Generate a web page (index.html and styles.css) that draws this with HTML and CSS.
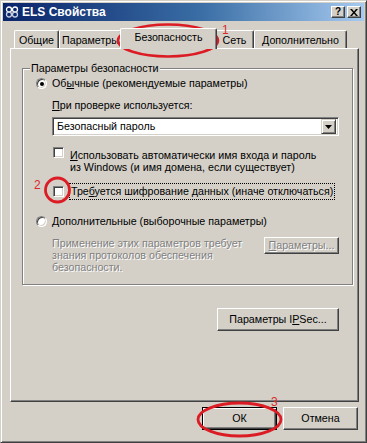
FILE: index.html
```html
<!DOCTYPE html>
<html lang="ru">
<head>
  <meta charset="UTF-8">
  <title>ELS Свойства</title>
  <link rel="stylesheet" href="styles.css">
</head>
<body>
  <div class="screen">
    <div class="window">
      <!-- Title bar -->
      <div class="titlebar">
        <svg class="app-icon" width="14" height="12" viewBox="0 0 14 12">
          <circle cx="4" cy="3.5" r="2.5" fill="none" stroke="#fff" stroke-width="1.3"/>
          <circle cx="10" cy="3.5" r="2.5" fill="none" stroke="#fff" stroke-width="1.3"/>
          <circle cx="4" cy="8.5" r="2.5" fill="none" stroke="#c8d0e0" stroke-width="1.3"/>
          <circle cx="10" cy="8.5" r="2.5" fill="none" stroke="#c8d0e0" stroke-width="1.3"/>
        </svg>
        <span class="title">ELS Свойства</span>
        <div class="title-buttons">
          <span class="tbtn help">?</span>
          <span class="tbtn close">
            <svg width="8" height="7" viewBox="0 0 8 7"><path d="M0 0h2l2 2.5L6 0h2L5 3.5 8 7H6L4 4.5 2 7H0l3-3.5z" fill="#000"/></svg>
          </span>
        </div>
      </div>

      <div class="content">
        <!-- Tabs -->
        <div class="tabs">
          <div class="tab tab-general">Общие</div>
          <div class="tab tab-params">Параметры</div>
          <div class="tab tab-security active">Безопасность</div>
          <div class="tab tab-net">Сеть</div>
          <div class="tab tab-extra">Дополнительно</div>
        </div>

        <!-- Tab page -->
        <div class="panel">
          <div class="group">
            <div class="group-title">Параметры безопасности</div>

            <div class="option-row first">
              <span class="radio checked"></span>
              <span>Об<u>ы</u>чные (рекомендуемые параметры)</span>
            </div>

            <div class="sub label-row"><u>П</u>ри проверке используется:</div>

            <div class="sub select">
              <span class="select-text">Безопасный пароль</span>
              <span class="select-btn">
                <svg width="7" height="4" viewBox="0 0 7 4"><path d="M0 0h7L3.5 4z" fill="#000"/></svg>
              </span>
            </div>

            <div class="check-row check-auto">
              <span class="checkbox"></span>
              <span class="check-text"><u>И</u>спользовать автоматически имя входа и пароль<br>из Windows (и имя домена, если существует)</span>
            </div>

            <div class="check-row check-crypt">
              <span class="checkbox"></span>
              <span class="focus-text">Тре<u>б</u>уется шифрование данных (иначе отключаться)</span>
            </div>

            <div class="option-row second">
              <span class="radio"></span>
              <span><u>Д</u>ополнительные (выборочные параметры)</span>
            </div>

            <div class="sub advanced">
              <div class="disabled-text">Применение этих параметров требует<br>знания протоколов обеспечения<br>безопасности.</div>
              <span class="btn btn-small disabled"><u>П</u>араметры...</span>
            </div>
          </div>

          <div class="ipsec-row">
            <span class="btn btn-ipsec">Параметры I<u>P</u>Sec...</span>
          </div>
        </div>

        <!-- Dialog buttons -->
        <div class="dialog-buttons">
          <span class="btn btn-default"><span class="btn-focus">ОК</span></span>
          <span class="btn">Отмена</span>
        </div>
      </div>
    </div>

    <!-- Red hand-drawn marks over the screenshot -->
    <svg class="marks" width="367" height="443" viewBox="0 0 367 443">
      <ellipse cx="168" cy="40.5" rx="50" ry="16" fill="none" stroke="#dc1c24" stroke-width="2.6"/>
      <text x="222" y="34" class="mark-num">1</text>
      <circle cx="57.5" cy="190" r="12" fill="none" stroke="#dc1c24" stroke-width="2.8"/>
      <text x="34" y="189" class="mark-num">2</text>
      <ellipse cx="239.5" cy="419.5" rx="41.5" ry="16.5" fill="none" stroke="#dc1c24" stroke-width="2.8"/>
      <text x="271" y="406" class="mark-num">3</text>
    </svg>
  </div>
</body>
</html>
```

FILE: styles.css
```css
/* Classic Windows dialog look */
* {
  box-sizing: border-box;
}

body {
  margin: 0;
  background: #d4d0c8;
  font-family: "Liberation Sans", Arial, sans-serif;
  font-size: 10.7px;
  line-height: 13px;
  color: #000;
}

u {
  text-decoration: underline;
  text-underline-offset: 1px;
}

.screen {
  position: relative;
  width: 367px;
  height: 443px;
}

.window {
  width: 367px;
  height: 443px;
  background: #d4d0c8;
  border: 1px solid;
  border-color: #d4d0c8 #404040 #404040 #d4d0c8;
  box-shadow: inset 1px 1px 0 #fff, inset -1px -1px 0 #808080;
  padding: 2px;
}

/* Title bar */
.titlebar {
  height: 18px;
  display: flex;
  align-items: center;
  padding: 0 3px 0 2px;
  background: linear-gradient(to right, #0a246a, #3a6ea5 55%, #a6caf0);
}

.app-icon {
  margin-right: 3px;
}

.title {
  color: #fff;
  font-weight: bold;
  font-size: 12px;
  flex: 1;
}

.title-buttons {
  display: flex;
  gap: 2px;
}

.tbtn {
  width: 14px;
  height: 12px;
  background: #d4d0c8;
  border: 1px solid;
  border-color: #fff #404040 #404040 #fff;
  box-shadow: inset -1px -1px 0 #808080;
  display: flex;
  align-items: center;
  justify-content: center;
  font-weight: bold;
  font-size: 10px;
  line-height: 10px;
}

/* Content area */
.content {
  padding: 7px 5px 0 7px;
}

.tabs {
  display: flex;
  align-items: flex-end;
  height: 20px;
  padding-left: 4px;
}

.tab {
  height: 18px;
  border-top: 1px solid #fff;
  border-left: 1px solid #fff;
  border-right: 1px solid #404040;
  border-radius: 2px 2px 0 0;
  box-shadow: inset -1px 0 0 #808080;
  display: flex;
  align-items: center;
  justify-content: center;
  padding-top: 1px;
  white-space: nowrap;
}

.tab-general { width: 45px; }
.tab-params { width: 63px; }
.tab-security { width: 93px; }
.tab-net { width: 39px; }
.tab-extra { width: 93px; }

.tab.active {
  position: relative;
  z-index: 1;
  width: 97px;
  height: 21px;
  margin: 0 -2px -1px;
  background: #d4d0c8;
  padding-top: 0;
  padding-bottom: 3px;
}

.panel {
  width: 349px;
  height: 354px;
  border: 1px solid;
  border-color: #fff #404040 #404040 #fff;
  box-shadow: inset -1px -1px 0 #808080;
  padding: 0 5px 0 11px;
}

/* Group box */
.group {
  margin-top: 19px;
  border: 1px solid #808080;
  box-shadow: 1px 1px 0 #fff, inset 1px 1px 0 #fff;
  padding: 0 13px 11px 13px;
}

.group-title {
  display: table;
  margin-top: -7px;
  margin-left: -6px;
  padding: 0 1px;
  background: #d4d0c8;
}

.option-row {
  display: flex;
  align-items: center;
  gap: 5px;
}

.option-row.first {
  margin-top: 2px;
}

.option-row.second {
  margin-top: 15px;
}

.radio {
  width: 11px;
  height: 11px;
  border-radius: 50%;
  background: #fff;
  border: 1px solid;
  border-color: #808080 #fff #fff #808080;
  box-shadow: inset 1px 1px 0 #404040, inset -1px -1px 0 #d4d0c8;
  display: flex;
  align-items: center;
  justify-content: center;
}

.radio.checked::after {
  content: "";
  width: 4px;
  height: 4px;
  border-radius: 50%;
  background: #000;
}

.sub {
  margin-left: 16px;
}

.label-row {
  margin-top: 9px;
}

.select {
  margin-top: 5px;
  height: 19px;
  background: #fff;
  border: 1px solid;
  border-color: #808080 #fff #fff #808080;
  box-shadow: inset 1px 1px 0 #404040, inset -1px -1px 0 #d4d0c8;
  display: flex;
  align-items: center;
  padding: 2px;
}

.select-text {
  flex: 1;
  padding-left: 2px;
}

.select-btn {
  width: 15px;
  height: 15px;
  background: #d4d0c8;
  border: 1px solid;
  border-color: #d4d0c8 #404040 #404040 #d4d0c8;
  box-shadow: inset 1px 1px 0 #fff, inset -1px -1px 0 #808080;
  display: flex;
  align-items: center;
  justify-content: center;
}

.check-row {
  display: flex;
  align-items: center;
  gap: 6px;
  margin-left: 17px;
  white-space: nowrap;
}

.check-auto {
  margin-top: 13px;
  align-items: flex-start;
  line-height: 12px;
}

.check-auto .checkbox {
  margin-top: -2px;
}

.check-crypt {
  margin-top: 10px;
}

.checkbox {
  width: 11px;
  height: 11px;
  flex: none;
  background: #fff;
  border: 1px solid;
  border-color: #808080 #fff #fff #808080;
  box-shadow: inset 1px 1px 0 #404040, inset -1px -1px 0 #d4d0c8;
}

.focus-text {
  border: 1px dotted #000;
  padding: 1px 1px;
  margin-left: -1px;
}

.advanced {
  margin-top: 9px;
  display: flex;
  justify-content: space-between;
  align-items: flex-start;
}

.disabled-text {
  color: #808080;
  text-shadow: 1px 1px 0 #fff;
  line-height: 12px;
}

/* Buttons */
.btn {
  display: flex;
  align-items: center;
  justify-content: center;
  width: 75px;
  height: 23px;
  background: #d4d0c8;
  border: 1px solid;
  border-color: #fff #404040 #404040 #fff;
  box-shadow: inset -1px -1px 0 #808080;
  white-space: nowrap;
}

.btn-small {
  height: 17px;
}

.btn.disabled {
  color: #808080;
  text-shadow: 1px 1px 0 #fff;
}

.ipsec-row {
  display: flex;
  justify-content: flex-end;
  margin-top: 23px;
  padding-right: 14px;
}

.btn-ipsec {
  width: 122px;
}

.dialog-buttons {
  display: flex;
  justify-content: flex-end;
  gap: 6px;
  margin-top: 5px;
  padding-right: 1px;
}

.btn-default {
  border: 1px solid #000;
  box-shadow: inset 1px 1px 0 #fff, inset -1px -1px 0 #404040, inset -2px -2px 0 #808080;
  padding: 3px;
}

.btn-focus {
  width: 100%;
  height: 100%;
  display: flex;
  align-items: center;
  justify-content: center;
}

/* Annotation overlay */
.marks {
  position: absolute;
  left: 0;
  top: 0;
  pointer-events: none;
}

.mark-num {
  fill: #dc2a2a;
  font-family: "Liberation Sans", Arial, sans-serif;
  font-size: 12px;
}
```
